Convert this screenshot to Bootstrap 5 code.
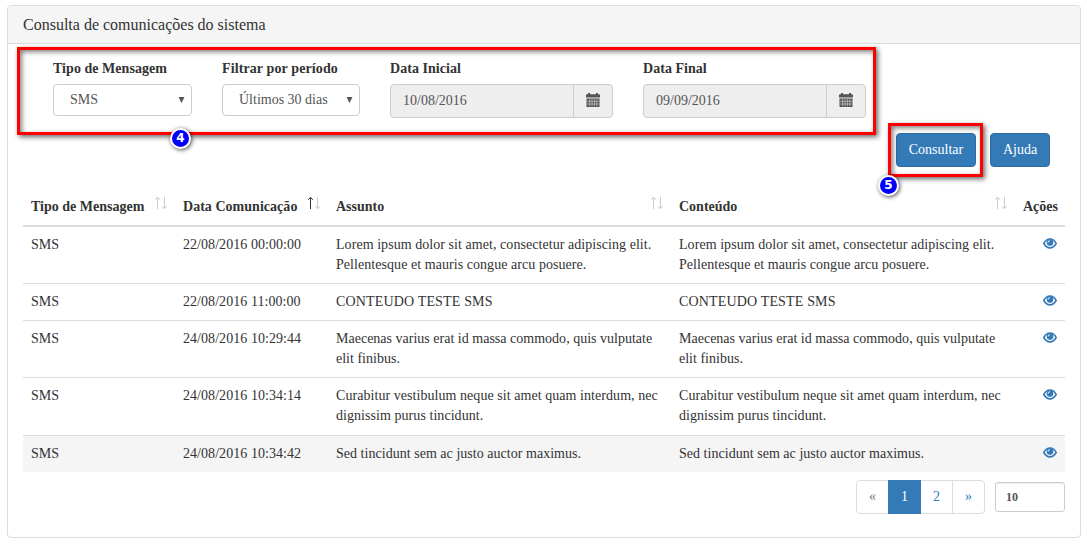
<!DOCTYPE html>
<html lang="pt-BR">
<head>
<meta charset="utf-8">
<meta name="viewport" content="width=device-width, initial-scale=1">
<title>Consulta de comunicações do sistema</title>
<link href="https://cdn.jsdelivr.net/npm/bootstrap@5.3.0/dist/css/bootstrap.min.css" rel="stylesheet">
<style>
body{font:14px/20px "Liberation Serif","Times New Roman",serif;color:#333;background:#fff;overflow:hidden}
.panel{margin:5px 6px 0 7px;height:533px;border:1px solid #ddd;border-radius:4px;box-shadow:0 1px 1px rgba(0,0,0,.05)}
.panel-head{height:38px;padding:9px 15px;background:#f5f5f5;border-bottom:1px solid #ddd;border-radius:3px 3px 0 0;font-size:16px;line-height:20px}
.filters{padding:15px 0 0 45px;height:89px}
.filters label{display:block;height:25px;line-height:20px;font-weight:700;letter-spacing:.04px}
.field-a{width:139px;margin-right:30px}
.field-b{width:138px;margin-right:30px}
.field-b label{letter-spacing:.11px}
.field-d{width:223px;margin-right:30px}
.form-select{height:32px;padding:1px 0 1px 16px;font-size:14px;line-height:28px;color:#555;border-color:#ccc;border-radius:4px;background-image:none}
.caret{position:absolute;right:7px;top:13px;width:7px;height:6px}
.input-group>.form-control,.input-group>.input-group-text{height:34px;font-size:14px;line-height:20px;color:#555;border-color:#ccc;background:#eee;border-radius:4px}
.input-group>.form-control{padding:6px 12px}
.input-group>.input-group-text{width:40px;padding:0 0 2px;justify-content:center}
.actions{height:34px;padding-right:30px;gap:14px}
.btn-primary{--bs-btn-bg:#337ab7;--bs-btn-border-color:#2e6da4;height:34px;font-size:14px;line-height:20px;padding:5px 0;border-radius:4px}
.btn-consult{width:80px}
.btn-help{width:60px}
.mark-box{position:absolute;border:3px solid #f00;box-shadow:2px 2px 5px rgba(0,0,0,.6),inset 2px 2px 5px rgba(0,0,0,.5);pointer-events:none}
.mark-num{position:absolute;width:21px;height:21px;border:2px solid #fff;border-radius:50%;background:#00f;color:#fff;font:700 12px/17px "DejaVu Sans",sans-serif;text-align:center;box-shadow:1px 1px 4px rgba(0,0,0,.7)}
.grid{width:1042px;margin:20px 0 0 15px;table-layout:fixed;color:#333;--bs-table-color:#333;--bs-table-bg:transparent}
.grid>:not(caption)>*>*{padding:8px;border:0;border-bottom:1px solid #ddd;box-shadow:none;white-space:nowrap;vertical-align:top}
.grid>thead>tr>th{height:39px;padding:10px 8px 7px;border-bottom:2px solid #ddd;position:relative}
.grid>thead>tr>th:nth-child(2){letter-spacing:.03px}
.grid>tbody>tr>td{letter-spacing:.055px}
.grid>tbody>tr:nth-child(2)>td:nth-child(n+3){letter-spacing:.16px}
.grid>tbody>tr:nth-child(3)>td:nth-child(n+3){letter-spacing:.01px}
.grid>tbody>tr:nth-child(5)>td:nth-child(n+3){letter-spacing:.03px}
.grid>tbody>tr:nth-child(4)>td{height:58px}
.grid>tbody>tr:last-child>td{border:0;background:#f5f5f5}
.sort{position:absolute;right:7px;top:9px;width:14px;height:14px;color:#ccc}
.grid .eye{display:block;margin:3px 0 0 auto;width:14px;height:11px}
.page-link{width:33px;height:34px;padding:6px 0;text-align:center;font-size:14px;line-height:20px;color:#337ab7;border-color:#ddd}
.page-item:first-child .page-link,.page-item:last-child .page-link{--bs-pagination-border-radius:4px}
.page-item.disabled .page-link{color:#777;border-color:#ddd;background:#fff}
.page-item.active .page-link{background:#337ab7;border-color:#337ab7}
.pager{gap:10px;margin:8px 15px 0 0}
.per-page{width:70px;height:30px;padding:5px 10px;font-size:12px;font-weight:700;line-height:18px;color:#555;border-color:#ccc;border-radius:3px;box-shadow:inset 0 1px 1px rgba(0,0,0,.075)}
</style>
</head>
<body>
<svg class="d-none">
<symbol id="cal" viewBox="0 0 14 14"><path fill="#555" d="M0 4.5V2.2Q0 1.2 1 1.2H2V0H4V1.2H10V0H12V1.2H13Q14 1.2 14 2.2V4.5ZM.5 5.5H13.5V14H.5Z"/><path stroke="#eee" stroke-width=".5" d="M1 8.3H13M1 11H13M3.6 6V13.3M6 6V13.3M8.4 6V13.3M10.8 6V13.3"/></symbol>
<symbol id="eye" viewBox="0 0 14 11"><path fill="none" stroke="#337ab7" stroke-width="1.6" d="M.8 5.5Q3.2 1.1 7 1T13.2 5.5Q10.6 9.8 7 9.9T.8 5.5Z"/><circle cx="7" cy="4.6" r="3.3" fill="#337ab7"/><path d="M5.1 4.5Q5.2 2.8 6.8 2.7" fill="none" stroke="#fff" stroke-width="1"/></symbol>
<symbol id="up" viewBox="0 0 7 14"><path fill="none" stroke="currentColor" stroke-width="1" d="M3.5 13V1.5M1.2 3.8 3.5 1.2 5.8 3.8"/></symbol>
<symbol id="both" viewBox="0 0 14 14"><use href="#up" width="7" height="14"/><use href="#up" width="7" height="14" transform="rotate(180 7 7)"/></symbol>
</svg>
<main class="panel position-relative">
<div class="panel-head">Consulta de comunicações do sistema</div>
<form>
<div class="filters d-flex">
<div class="field-a"><label>Tipo de Mensagem</label><div class="position-relative"><div class="form-select">SMS</div><svg class="caret" viewBox="0 0 7 6"><path fill="#555" d="M.5 0H6.5L3.5 6Z"/></svg></div></div>
<div class="field-b"><label>Filtrar por período</label><div class="position-relative"><div class="form-select">Últimos 30 dias</div><svg class="caret" viewBox="0 0 7 6"><path fill="#555" d="M.5 0H6.5L3.5 6Z"/></svg></div></div>
<div class="field-d"><label>Data Inicial</label><div class="input-group"><div class="form-control">10/08/2016</div><span class="input-group-text"><svg width="14" height="14"><use href="#cal"/></svg></span></div></div>
<div class="field-d"><label>Data Final</label><div class="input-group"><div class="form-control">09/09/2016</div><span class="input-group-text"><svg width="14" height="14"><use href="#cal"/></svg></span></div></div>
</div>
<div class="actions d-flex justify-content-end"><button type="button" class="btn btn-primary btn-consult">Consultar</button><button type="button" class="btn btn-primary btn-help">Ajuda</button></div>
</form>
<table class="table grid mb-0">
<colgroup><col style="width:152px"><col style="width:153px"><col style="width:343px"><col style="width:344px"><col style="width:50px"></colgroup>
<thead><tr>
<th>Tipo de Mensagem<svg class="sort"><use href="#both"/></svg></th>
<th>Data Comunicação<svg class="sort"><use href="#up" width="7" height="14" color="#333"/><use href="#up" width="7" height="14" transform="rotate(180 7 7)"/></svg></th>
<th>Assunto<svg class="sort"><use href="#both"/></svg></th>
<th>Conteúdo<svg class="sort"><use href="#both"/></svg></th>
<th class="text-end">Ações</th></tr></thead>
<tbody>
<tr><td>SMS</td><td>22/08/2016 00:00:00</td><td>Lorem ipsum dolor sit amet, consectetur adipiscing elit.<br>Pellentesque et mauris congue arcu posuere.</td><td>Lorem ipsum dolor sit amet, consectetur adipiscing elit.<br>Pellentesque et mauris congue arcu posuere.</td><td><svg class="eye"><use href="#eye"/></svg></td></tr>
<tr><td>SMS</td><td>22/08/2016 11:00:00</td><td>CONTEUDO TESTE SMS</td><td>CONTEUDO TESTE SMS</td><td><svg class="eye"><use href="#eye"/></svg></td></tr>
<tr><td>SMS</td><td>24/08/2016 10:29:44</td><td>Maecenas varius erat id massa commodo, quis vulputate<br>elit finibus.</td><td>Maecenas varius erat id massa commodo, quis vulputate<br>elit finibus.</td><td><svg class="eye"><use href="#eye"/></svg></td></tr>
<tr><td>SMS</td><td>24/08/2016 10:34:14</td><td>Curabitur vestibulum neque sit amet quam interdum, nec<br>dignissim purus tincidunt.</td><td>Curabitur vestibulum neque sit amet quam interdum, nec<br>dignissim purus tincidunt.</td><td><svg class="eye"><use href="#eye"/></svg></td></tr>
<tr><td>SMS</td><td>24/08/2016 10:34:42</td><td>Sed tincidunt sem ac justo auctor maximus.</td><td>Sed tincidunt sem ac justo auctor maximus.</td><td><svg class="eye"><use href="#eye"/></svg></td></tr>
</tbody></table>
<div class="pager d-flex justify-content-end align-items-center">
<ul class="pagination mb-0"><li class="page-item disabled"><span class="page-link">«</span></li><li class="page-item active"><span class="page-link">1</span></li><li class="page-item"><a class="page-link" href="#">2</a></li><li class="page-item"><a class="page-link" href="#">»</a></li></ul>
<div class="form-control per-page">10</div>
</div>
<div class="mark-box" style="left:9px;top:41px;width:859px;height:88px"></div>
<div class="mark-num" style="left:162px;top:122px">4</div>
<div class="mark-box" style="left:880px;top:117px;width:95px;height:54px"></div>
<div class="mark-num" style="left:870px;top:169px">5</div>
</main>
<script src="https://cdn.jsdelivr.net/npm/bootstrap@5.3.0/dist/js/bootstrap.bundle.min.js"></script>
</body>
</html>
